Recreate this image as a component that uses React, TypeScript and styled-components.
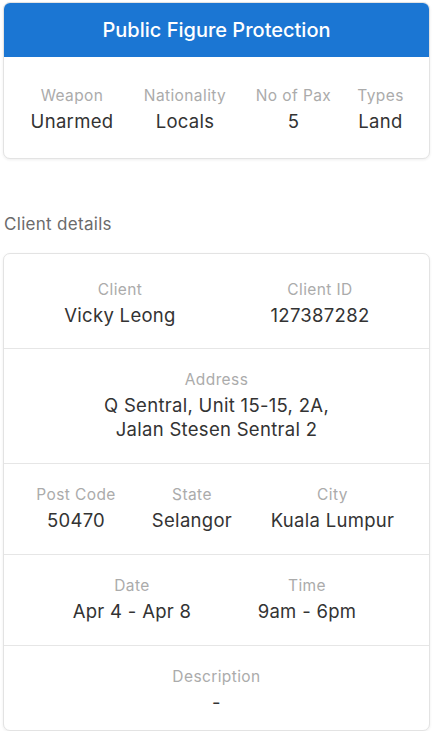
import React from "react";
import styled, { createGlobalStyle } from "styled-components";

const Global = createGlobalStyle`
  html, body { margin: 0; padding: 0; background: #ffffff; }
  body { font-family: Inter, "Noto Sans", "Liberation Sans", sans-serif; -webkit-font-smoothing: antialiased; }
  * { box-sizing: border-box; }
`;

const Page = styled.div`
  display: flex;
  flex-direction: column;
  padding: 2px 5px 0 3px;
`;

const Card = styled.div`
  border: 1px solid #e3e3e3;
  border-radius: 7px;
  background: #fff;
  box-shadow: 0 1px 3px rgba(0, 0, 0, 0.07);
  overflow: hidden;
`;

const Header = styled.div`
  height: 55px;
  margin: -1px -1px 0;
  background: #1b76d3;
  color: #fff;
  display: flex;
  align-items: center;
  justify-content: center;
  font-size: 20px;
  font-weight: 500;
  letter-spacing: 0;
`;

const Row = styled.div<{ $cols: string; $pt?: number; $pb?: number }>`
  display: grid;
  grid-template-columns: ${(p) => p.$cols};
  padding: ${(p) => p.$pt ?? 20}px 0 ${(p) => p.$pb ?? 22}px;
  & + & {
    border-top: 1px solid #e6e6e6;
  }
`;

const Field = styled.div`
  display: flex;
  flex-direction: column;
  align-items: center;
  gap: 2px;
  min-width: 0;
`;

const Label = styled.div`
  font-size: 15.5px;
  line-height: 22px;
  letter-spacing: 0.4px;
  color: #ababab;
  white-space: nowrap;
`;

const Value = styled.div`
  font-size: 18.5px;
  line-height: 24px;
  letter-spacing: 0.3px;
  color: #333;
  white-space: nowrap;
  text-align: center;
`;

const SectionTitle = styled.div`
  margin: 54px 0 18px 1px;
  font-size: 17px;
  line-height: 22px;
  letter-spacing: 0.3px;
  color: #6b6b6b;
`;

type F = { label: string; value: React.ReactNode };

const Fields = ({ items }: { items: F[] }) => (
  <>
    {items.map((f) => (
      <Field key={f.label}>
        <Label>{f.label}</Label>
        <Value>{f.value}</Value>
      </Field>
    ))}
  </>
);

export default function App() {
  return (
    <>
      <Global />
      <Page>
        <Card>
          <Header>Public Figure Protection</Header>
          <Row $cols="136px 90px 127px 47px" $pt={28} $pb={25}>
            <Fields
              items={[
                { label: "Weapon", value: "Unarmed" },
                { label: "Nationality", value: "Locals" },
                { label: "No of Pax", value: "5" },
                { label: "Types", value: "Land" },
              ]}
            />
          </Row>
        </Card>

        <SectionTitle>Client details</SectionTitle>

        <Card>
          <Row $cols="232px 168px" $pt={25} $pb={21}>
            <Fields
              items={[
                { label: "Client", value: "Vicky Leong" },
                { label: "Client ID", value: "127387282" },
              ]}
            />
          </Row>
          <Row $cols="1fr">
            <Fields
              items={[
                {
                  label: "Address",
                  value: (
                    <>
                      Q Sentral, Unit 15-15, 2A,
                      <br />
                      Jalan Stesen Sentral 2
                    </>
                  ),
                },
              ]}
            />
          </Row>
          <Row $cols="144px 88px 193px">
            <Fields
              items={[
                { label: "Post Code", value: "50470" },
                { label: "State", value: "Selangor" },
                { label: "City", value: "Kuala Lumpur" },
              ]}
            />
          </Row>
          <Row $cols="256px 94px">
            <Fields
              items={[
                { label: "Date", value: "Apr 4 - Apr 8" },
                { label: "Time", value: "9am - 6pm" },
              ]}
            />
          </Row>
          <Row $cols="1fr" $pb={16}>
            <Fields items={[{ label: "Description", value: "-" }]} />
          </Row>
        </Card>
      </Page>
    </>
  );
}
